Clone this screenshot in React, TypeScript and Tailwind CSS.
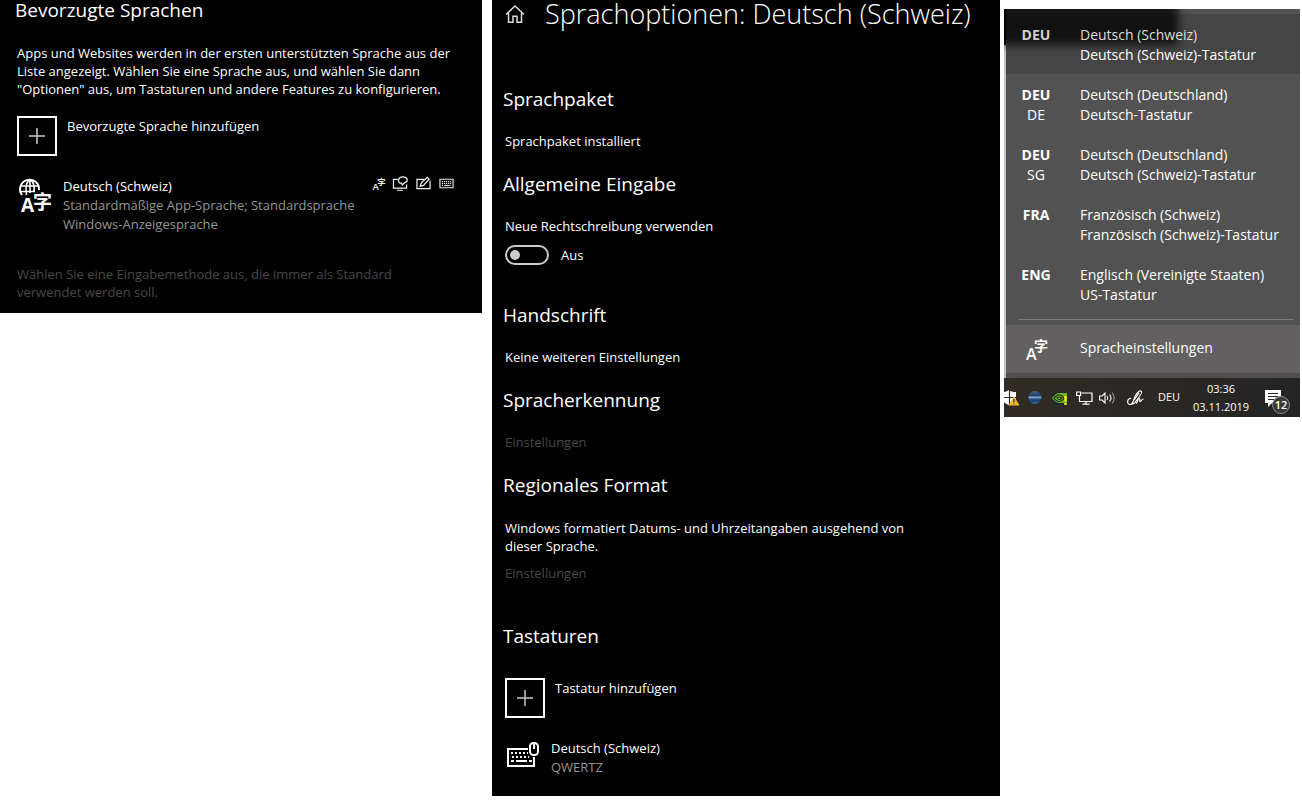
import React, { useState } from "react";

type InputMethod = {
  code: string;
  region?: string;
  language: string;
  keyboard: string;
};

const inputMethods: InputMethod[] = [
  { code: "DEU", language: "Deutsch (Schweiz)", keyboard: "Deutsch (Schweiz)-Tastatur" },
  { code: "DEU", region: "DE", language: "Deutsch (Deutschland)", keyboard: "Deutsch-Tastatur" },
  { code: "DEU", region: "SG", language: "Deutsch (Deutschland)", keyboard: "Deutsch (Schweiz)-Tastatur" },
  { code: "FRA", language: "Französisch (Schweiz)", keyboard: "Französisch (Schweiz)-Tastatur" },
  { code: "ENG", language: "Englisch (Vereinigte Staaten)", keyboard: "US-Tastatur" },
];

// Small "A字" mark, shared by the flyout and the feature icons
function LanguageMark({ className }: { className?: string }) {
  return (
    <svg viewBox="0 0 22 22" className={`overflow-visible ${className}`} fill="currentColor" aria-hidden="true">
      <text x="1" y="22" fontSize="16" fontWeight="600" fontFamily="Open Sans, sans-serif">
        A
      </text>
      <text x="9" y="13" fontSize="14" fontWeight="700" fontFamily="Noto Sans CJK SC, sans-serif">
        字
      </text>
    </svg>
  );
}

function GlobeLanguageIcon() {
  return (
    <svg viewBox="-2 -1 34 36" className="h-9 w-[34px] overflow-visible" fill="none" stroke="white" strokeWidth="2" aria-hidden="true">
      <path d="M3 17A9.500 9.500 0 1 1 20 12" />
      <path d="M7.500 17C6 8 8 2.500 11 2.500S16 8 15 13M2 8h18M2 13.500h14M11 2v13" strokeWidth="1.600" />
      <text x="2" y="34" fontSize="19" fontWeight="700" fill="white" stroke="none" fontFamily="Open Sans, sans-serif">
        A
      </text>
      <text x="14" y="31" fontSize="19" fontWeight="700" fill="white" stroke="none" fontFamily="Noto Sans CJK SC, sans-serif">
        字
      </text>
    </svg>
  );
}

function FeatureIcons() {
  return (
    <div className="flex h-3 items-center gap-2 text-[#f0f0f0]">
      <LanguageMark className="size-[13px]" />
      <svg viewBox="0 0 16 16" className="size-[15px] overflow-visible" fill="none" stroke="currentColor" strokeWidth="1.300" aria-hidden="true">
        <path d="M5 3.500H.5v9.500h14V9M4.500 15.200h6" />
        <path d="M7.500 7.500C4.500 6 5.500 1 10.500 1s6.500 4.500 2 6l-2.500 2.500-1-2z" />
      </svg>
      <svg viewBox="0 0 16 16" className="size-[15px]" fill="none" stroke="currentColor" strokeWidth="1.300" aria-hidden="true">
        <path d="M9 3.500H1v10h14V5" />
        <path d="M4.500 11l1-3.500L12 1.500l2 2L8 10z" />
      </svg>
      <svg viewBox="0 0 16 16" className="size-[15px]" fill="none" stroke="currentColor" strokeWidth="1.200" aria-hidden="true">
        <path d="M1 3.500h14v9H1z" />
        <path d="M3 6h10M3 8h10M3 10h2M11 10h2" strokeDasharray="1.300 .9" />
        <path d="M5.500 10.200h5" />
      </svg>
    </div>
  );
}

function KeyboardMouseIcon() {
  return (
    <svg viewBox="0 0 34 32" className="h-8 w-[34px]" fill="none" stroke="white" strokeWidth="2" aria-hidden="true">
      <path d="M23 7H3v17h26V15" />
      <path d="M6 11h17M7 15h17" strokeDasharray="2 2" />
      <path d="M6 19h3M11 19h11M24 19h3" />
      <rect x="25" y="1" width="8" height="12" rx="3.500" />
      <path d="M29 2v5" />
    </svg>
  );
}

function AddButton({ label }: { label: string }) {
  return (
    <button className="flex items-start gap-2.5 text-left">
      <span className="flex size-10 items-center justify-center border-2 border-white">
        <svg viewBox="0 0 16 16" className="size-4" stroke="#c8c8c8" strokeWidth="1.500" aria-hidden="true">
          <path d="M0 8h16M8 0v16" />
        </svg>
      </span>
      <span className="leading-5">{label}</span>
    </button>
  );
}

function SectionTitle({ children, className }: { children: React.ReactNode; className: string }) {
  return <h2 className={`-ml-0.5 text-[19px] leading-6 ${className}`}>{children}</h2>;
}

function PreferredLanguages() {
  return (
    <section className="bg-black pr-7 pb-3 pl-[17px]">
      <h2 className="-ml-0.5 text-[19px] leading-5">Bevorzugte Sprachen</h2>
      <p className="mt-6 leading-[18px] whitespace-nowrap">
        Apps und Websites werden in der ersten unterstützten Sprache aus der
        <br />
        Liste angezeigt. Wählen Sie eine Sprache aus, und wählen Sie dann
        <br />
        "Optionen" aus, um Tastaturen und andere Features zu konfigurieren.
      </p>
      <div className="mt-[18px]">
        <AddButton label="Bevorzugte Sprache hinzufügen" />
      </div>
      <div className="mt-[21px] flex items-start gap-3 leading-[19px]">
        <GlobeLanguageIcon />
        <div className="flex-1 text-[#959595]">
          <div className="flex justify-between">
            <h3 className="text-white">Deutsch (Schweiz)</h3>
            <FeatureIcons />
          </div>
          <p>Standardmäßige App-Sprache; Standardsprache</p>
          <p>Windows-Anzeigesprache</p>
        </div>
      </div>
      <p className="mt-[31px] leading-[18px] text-[#484848]">
        Wählen Sie eine Eingabemethode aus, die immer als Standard
        <br />
        verwendet werden soll.
      </p>
    </section>
  );
}

function LanguageOptions() {
  const [newSpelling, setNewSpelling] = useState(false);

  return (
    <section className="ml-2.5 bg-black pb-[19px] pl-[13px] leading-[18px]">
      <div className="flex h-7 items-center gap-5">
        <button aria-label="Startseite">
          <svg viewBox="0 0 20 20" className="size-5" fill="none" stroke="#dcdcdc" strokeWidth="1.500" aria-hidden="true">
            <path d="M1 10.500L10 2l9 8.500M3.500 9v9.200H8v-6h4v6h4.500V9" />
          </svg>
        </button>
        <h1 className="text-[27px] leading-7 font-light whitespace-nowrap">Sprachoptionen: Deutsch (Schweiz)</h1>
      </div>

      <SectionTitle className="mt-[59px]">Sprachpaket</SectionTitle>
      <p className="mt-[21px]">Sprachpaket installiert</p>

      <SectionTitle className="mt-[22px]">Allgemeine Eingabe</SectionTitle>
      <label htmlFor="new-spelling" className="mt-[21px] block">
        Neue Rechtschreibung verwenden
      </label>
      <div className="mt-2.5 flex items-center gap-3">
        <input
          id="new-spelling"
          type="checkbox"
          role="switch"
          checked={newSpelling}
          onChange={(e) => setNewSpelling(e.target.checked)}
          className="flex h-5 w-11 appearance-none items-center rounded-full border-2 border-[#cccccc] px-[3px] before:size-2.5 before:rounded-full before:bg-[#cccccc] checked:justify-end"
        />
        <span>{newSpelling ? "Ein" : "Aus"}</span>
      </div>

      <SectionTitle className="mt-[38px]">Handschrift</SectionTitle>
      <p className="mt-[21px]">Keine weiteren Einstellungen</p>

      <SectionTitle className="mt-[22px]">Spracherkennung</SectionTitle>
      <a href="#speech" className="mt-[21px] block text-[#484848]">
        Einstellungen
      </a>

      <SectionTitle className="mt-[22px]">Regionales Format</SectionTitle>
      <p className="mt-[22px]">
        Windows formatiert Datums- und Uhrzeitangaben ausgehend von
        <br />
        dieser Sprache.
      </p>
      <a href="#region" className="mt-[9px] block text-[#484848]">
        Einstellungen
      </a>

      <SectionTitle className="mt-[42px]">Tastaturen</SectionTitle>
      <div className="mt-[30px]">
        <AddButton label="Tastatur hinzufügen" />
      </div>
      <div className="mt-[21px] flex items-center gap-3 leading-[19px]">
        <KeyboardMouseIcon />
        <div>
          <h3>Deutsch (Schweiz)</h3>
          <p className="text-[#959595]">QWERTZ</p>
        </div>
      </div>
    </section>
  );
}

function Taskbar() {
  return (
    <div className="flex h-[39px] items-center bg-linear-to-r from-[#302c23] to-[#252425] text-[11px] text-white">
      <button className="w-5" aria-label="Windows-Sicherheit">
        <svg viewBox="0 0 16 16" className="size-4" aria-hidden="true">
          <path d="M-2 2q5 0 7-2 2 2 7 2v5q0 6-7 8-7-2-7-8z" fill="white" />
          <path d="M5.500 0v15M-2 7.500h14" stroke="#302c23" strokeWidth="1.200" />
          <path d="M10 6l5.500 9.500h-11z" fill="#f5b82e" />
          <path d="M10 9v3.500M10 13.500v1" stroke="#302c23" strokeWidth="1.200" />
        </svg>
      </button>
      <button className="flex w-6 justify-center" aria-label="Netzwerkstatus">
        <svg viewBox="0 0 16 16" className="size-4" aria-hidden="true">
          <defs>
            <linearGradient id="orb" x2="0" y2="1">
              <stop offset="0" stopColor="#4b6580" />
              <stop offset="0.350" stopColor="#1c3e68" />
              <stop offset="0.480" stopColor="#8fb0d0" />
              <stop offset="0.600" stopColor="#2d5f95" />
              <stop offset="0.700" stopColor="#173c6b" />
              <stop offset="1" stopColor="#2b72b9" />
            </linearGradient>
          </defs>
          <circle cx="7" cy="7.500" r="6.500" fill="url(#orb)" />
        </svg>
      </button>
      <button className="flex w-6 justify-center" aria-label="Grafikeinstellungen">
        <svg viewBox="0 0 16 16" className="size-4" aria-hidden="true">
          <path d="M0 1h15v14H0z" fill="#1f2b2b" />
          <path d="M0 8q3-4 6-5h9v10H7Q2 12 0 8z" fill="#75b51b" />
          <path d="M2 8q3-3.500 6-3t4 3.500q-2 3-5 3T2 8zM5 8q2-2 5 0-3 3-5 0z" fill="none" stroke="#1f3a14" strokeWidth="1.200" />
          <path d="M13.500 6v5.500M13.500 13v2" stroke="#ffe11a" strokeWidth="2.400" />
        </svg>
      </button>
      <button className="flex w-6 justify-center" aria-label="Netzwerk">
        <svg viewBox="0 0 17 16" className="h-4 w-[17px]" fill="none" stroke="white" strokeWidth="1.200" aria-hidden="true">
          <path d="M5.500 3H16v8.500H3.500V6M10 11.500V14M6.500 14.200h7" />
          <path d="M.6 2h4v3.500h-4z" />
        </svg>
      </button>
      <button className="flex w-[22px] justify-center" aria-label="Lautstärke">
        <svg viewBox="0 0 16 16" className="size-4" fill="none" stroke="white" strokeWidth="1.100" aria-hidden="true">
          <path d="M.6 6h2.500L6 3v10L3.100 10H.6z" />
          <path d="M8 6q1.500 2 0 4M10.500 4.500q3 3.500 0 7" />
          <path d="M13 2.500q4.500 5.500 0 11" stroke="#9a9894" />
        </svg>
      </button>
      <button className="flex w-[34px] justify-center" aria-label="Windows Ink">
        <svg viewBox="0 0 18 18" className="size-[18px]" fill="none" stroke="white" strokeWidth="1.200" aria-hidden="true">
          <path d="M5 9.500C1 9 .5 15.500 4 15.500c3.500 0 3-5 5.500-9S14 1 15.500 2.500 12 9.500 8.500 14l-2 1 .5-2.500L13 4" />
          <path d="M10 14.500c2-1 1.500-5 3-5s0 3 1.200 3S15.500 10 17.500 10" />
        </svg>
      </button>
      <button className="w-[34px]">DEU</button>
      <button className="flex-1 pl-1 leading-[18px]">
        <span className="block">03:36</span>
        <span className="block">03.11.2019</span>
      </button>
      <button className="relative flex h-full w-12 items-center justify-center" aria-label="Info-Center">
        <svg viewBox="0 0 18 18" className="mr-1.5 size-[18px]" aria-hidden="true">
          <path d="M1 1h16v13H8l-4 4v-4H1z" fill="white" />
          <path d="M4 4.500h10M4 7.500h10M4 10.500h6" stroke="#2a2928" />
        </svg>
        <span className="absolute right-2.5 bottom-[3px] flex size-[18px] items-center justify-center rounded-full border border-[#8a8a8a] bg-[#3a3939] font-semibold">
          12
        </span>
      </button>
    </div>
  );
}

function LanguageFlyout() {
  const [active, setActive] = useState(0);

  return (
    <aside className="mt-[9px] ml-1">
      <div className="relative overflow-hidden bg-[#525252] pt-[5px] text-sm leading-5 text-white">
        {inputMethods.map((method, i) => (
          <button
            key={i}
            onClick={() => setActive(i)}
            className={`flex h-[60px] w-full items-start gap-6 pt-[11px] pl-3 text-left ${
              active === i ? "bg-[#454545]" : ""
            }`}
          >
            <span className={`relative z-10 w-10 text-center ${active === i ? "text-[#cfcfcf]" : ""}`}>
              <span className="block font-bold">{method.code}</span>
              {method.region && <span className="block">{method.region}</span>}
            </span>
            <span className="relative z-10 whitespace-nowrap">
              <span className={`block ${active === i ? "text-[#dddddd]" : ""}`}>{method.language}</span>
              <span className="block">{method.keyboard}</span>
            </span>
          </button>
        ))}
        <hr className="mt-[5px] mr-1.5 mb-[5px] ml-3.5 border-[#7b7b7b]" />
        <button className="flex h-12 w-full items-center gap-6 bg-[#626061] pb-0.5 pl-3">
          <span className="flex w-10 justify-center pt-0.5">
            <LanguageMark className="size-[22px]" />
          </span>
          Spracheinstellungen
        </button>
        <div className="h-[5px] bg-[#504f4e]" />
        {/* window edge and the shadow that falls over the first entry */}
        <div className="pointer-events-none absolute top-0 bottom-0 left-0 w-0.5 bg-[#c4c4c4]" />
        <div className="pointer-events-none absolute -top-4 -left-4 h-[52px] w-[190px] bg-black/75 blur-[5px]" />
        <div className="pointer-events-none absolute top-0 left-0 h-9 w-0.5 bg-black" />
      </div>
      <Taskbar />
    </aside>
  );
}

export default function App() {
  return (
    <main className="grid grid-cols-[minmax(0,482fr)_minmax(0,518fr)_minmax(0,300fr)] items-start bg-white pr-0.5 font-['Open_Sans',sans-serif] text-[13px] text-white">
      <PreferredLanguages />
      <LanguageOptions />
      <LanguageFlyout />
    </main>
  );
}
